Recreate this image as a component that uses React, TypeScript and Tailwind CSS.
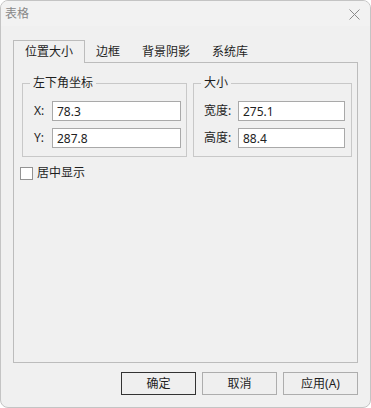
import { useState } from "react";

const tabs = ["位置大小", "边框", "背景阴影", "系统库"];

function Field({
  label,
  value,
  labelW,
}: {
  label: string;
  value: string;
  labelW: string;
}) {
  return (
    <div className="flex items-center">
      <span className={`${labelW} shrink-0 text-[12px] leading-[16px] text-[#1e1e1e]`}>
        {label}
      </span>
      <input
        defaultValue={value}
        size={1}
        className="h-[20px] w-0 min-w-0 flex-1 border border-[#a9a9a9] bg-white px-[4px] text-[12px] text-[#222] outline-none"
      />
    </div>
  );
}

export default function App() {
  const [active, setActive] = useState(0);
  const [centered, setCentered] = useState(false);

  return (
    <div className="flex h-[408px] w-[371px] flex-col overflow-hidden rounded-[8px] border border-[#c4c4c4] bg-[#f0f0f0] font-['Noto_Sans','Noto_Sans_CJK_SC',sans-serif] text-[12px] text-[#1e1e1e]">
      {/* title bar */}
      <div className="flex h-[25px] items-center justify-between bg-[#f2f2f2] pl-[4px] pr-[10px]">
        <span className="text-[12px] leading-[16px] text-[#888]">表格</span>
        <svg width="11" height="11" viewBox="0 0 11 11" className="mt-[1px]">
          <path d="M0.5 0.5 L10.5 10.5 M10.5 0.5 L0.5 10.5" stroke="#8a8a8a" strokeWidth="1" />
        </svg>
      </div>

      <div className="flex flex-col px-[12px] pt-[14px]">
        {/* tabs */}
        <div className="flex">
          {tabs.map((t, i) => (
            <button
              key={t}
              type="button"
              onClick={() => setActive(i)}
              className={`relative h-[23px] px-[11px] text-[12px] leading-[16px] ${
                i === active
                  ? "z-10 -mb-px border border-b-0 border-[#bcbcbc] bg-[#f0f0f0]"
                  : "-mb-px"
              }`}
            >
              {t}
            </button>
          ))}
        </div>

        {/* panel */}
        <div className="flex h-[301px] flex-col border border-[#bcbcbc] pl-[8px] pt-[12px]">
          <div className="flex gap-[6px]">
            <fieldset className="w-[165px] min-w-0 shrink-0 border border-[#c8c8c8] p-0 pb-[8px]">
              <legend className="ml-[7px] px-[3px] text-[12px] leading-[16px]">左下角坐标</legend>
              <div className="flex flex-col gap-[7px] pl-[11px] pr-[5px] pt-[10px]">
                <Field label="X:" value="78.3" labelW="w-[18px]" />
                <Field label="Y:" value="287.8" labelW="w-[18px]" />
              </div>
            </fieldset>
            <fieldset className="w-[159px] min-w-0 shrink-0 border border-[#c8c8c8] p-0 pb-[8px]">
              <legend className="ml-[7px] px-[3px] text-[12px] leading-[16px]">大小</legend>
              <div className="flex flex-col gap-[7px] pl-[10px] pr-[6px] pt-[10px]">
                <Field label="宽度:" value="275.1" labelW="w-[34px]" />
                <Field label="高度:" value="88.4" labelW="w-[34px]" />
              </div>
            </fieldset>
          </div>

          <label className="ml-[-2px] mt-[8px] flex items-center gap-[4px]">
            <span
              onClick={() => setCentered((v) => !v)}
              className="flex h-[13px] w-[13px] items-center justify-center border border-[#939393] bg-white text-[10px] leading-none"
            >
              {centered ? "✓" : ""}
            </span>
            <span className="text-[12px] leading-[16px]">居中显示</span>
          </label>
        </div>

        {/* buttons */}
        <div className="mt-[9px] flex justify-end gap-[6px]">
          <button
            type="button"
            className="h-[23px] w-[75px] border border-[#333] bg-[#efefef] text-[12px] leading-[16px]"
          >
            确定
          </button>
          <button
            type="button"
            className="h-[23px] w-[75px] border border-[#adadad] bg-[#efefef] text-[12px] leading-[16px]"
          >
            取消
          </button>
          <button
            type="button"
            className="h-[23px] w-[75px] border border-[#adadad] bg-[#efefef] text-[12px] leading-[16px]"
          >
            应用(A)
          </button>
        </div>
      </div>
    </div>
  );
}
